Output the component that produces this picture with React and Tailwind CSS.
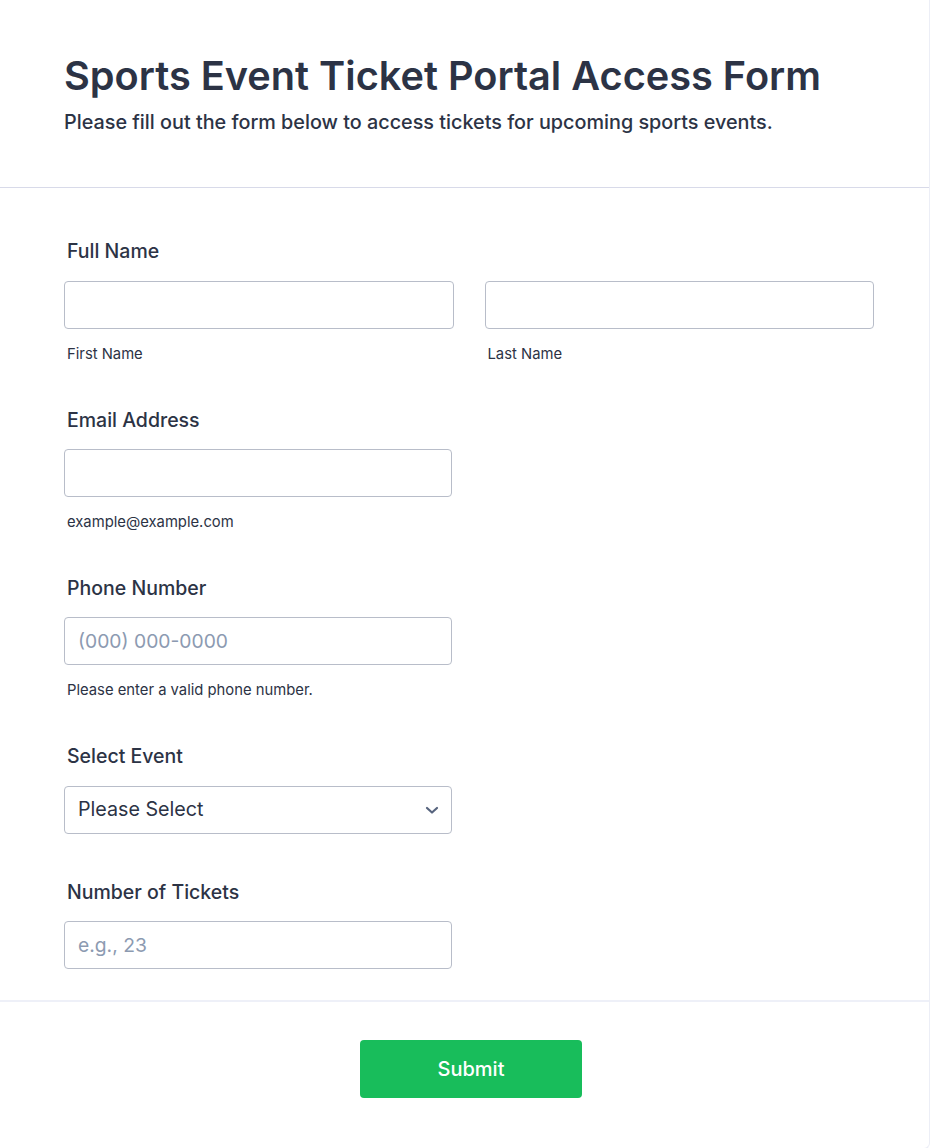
import React from "react";

const font = { fontFamily: "Inter, 'Noto Sans', sans-serif" };

function Label({ children }) {
  return (
    <label className="block pl-[3px] text-[19.5px] leading-[28px] font-medium text-[#2c3345]">
      {children}
    </label>
  );
}

function Sub({ children }) {
  return (
    <p className="mt-[15px] pl-[3px] text-[14.8px] leading-[20px] text-[#2c3345]">
      {children}
    </p>
  );
}

function TextInput({ placeholder }) {
  return (
    <input
      type="text"
      placeholder={placeholder}
      className="block h-[48px] w-full rounded-[4px] border border-[#b8bdc9] bg-white px-[13px] text-[19.3px] text-[#2c3345] placeholder:text-[#8c9ab1] outline-none"
    />
  );
}

export default function App() {
  return (
    <div className="min-h-screen bg-white" style={font}>
      <div className="w-[930px] rounded-br-[6px] border-r border-b border-[#eceef6] bg-white">
        {/* header */}
        <div className="border-b border-[#d8dae9] px-[64px] pt-[52px] pb-[51px]">
          <h1 className="text-[39.7px] leading-[48px] font-semibold text-[#2c3345]">
            Sports Event Ticket Portal Access Form
          </h1>
          <p className="mt-[8px] text-[19.8px] leading-[28px] font-medium text-[#2c3345]">
            Please fill out the form below to access tickets for upcoming sports events.
          </p>
        </div>

        {/* fields */}
        <div className="pl-[64px] pr-[55px] pt-[49px] pb-[31px]">
          <div>
            <Label>Full Name</Label>
            <div className="mt-[16px] grid grid-cols-2 gap-[31px]">
              <div>
                <TextInput />
                <Sub>First Name</Sub>
              </div>
              <div>
                <TextInput />
                <Sub>Last Name</Sub>
              </div>
            </div>
          </div>

          <div className="mt-[42px] w-[388px]">
            <Label>Email Address</Label>
            <div className="mt-[15px]">
              <TextInput />
            </div>
            <Sub>example@example.com</Sub>
          </div>

          <div className="mt-[42px] w-[388px]">
            <Label>Phone Number</Label>
            <div className="mt-[15px]">
              <TextInput placeholder="(000) 000-0000" />
            </div>
            <Sub>Please enter a valid phone number.</Sub>
          </div>

          <div className="mt-[42px] w-[388px]">
            <Label>Select Event</Label>
            <div className="mt-[16px] flex h-[48px] w-full items-center justify-between rounded-[4px] border border-[#b8bdc9] bg-white pr-[12px] pl-[13px] text-[19.7px] text-[#2c3345]">
              <span>Please Select</span>
              <svg width="14" height="10" viewBox="0 0 14 10" fill="none">
                <path
                  d="M2 3l5 4.5L12 3"
                  stroke="#57647e"
                  strokeWidth="2.2"
                  strokeLinecap="round"
                  strokeLinejoin="round"
                />
              </svg>
            </div>
          </div>

          <div className="mt-[44px] w-[388px]">
            <Label>Number of Tickets</Label>
            <div className="mt-[15px]">
              <TextInput placeholder="e.g., 23" />
            </div>
          </div>
        </div>

        {/* footer */}
        <div className="flex justify-center border-t-2 border-[#eef0f8] pl-[13px] pt-[38px] pb-[50px]">
          <button className="h-[58px] w-[222px] rounded-[4px] bg-[#18bd5b] text-[20px] font-medium text-white">
            Submit
          </button>
        </div>
      </div>
    </div>
  );
}
